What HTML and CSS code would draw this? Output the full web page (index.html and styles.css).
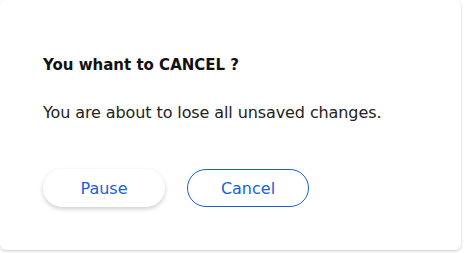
FILE: index.html
```html
<!DOCTYPE html>
<html>
<head>
<meta charset="utf-8">
<link rel="stylesheet" href="styles.css">
</head>
<body>
<div class="card">
  <h2 class="title">You whant to CANCEL ?</h2>
  <p class="message">You are about to lose all unsaved changes.</p>
  <div class="actions">
    <button class="btn btn-pause">Pause</button>
    <button class="btn btn-cancel">Cancel</button>
  </div>
</div>
</body>
</html>
```
FILE: styles.css
```css
html, body {
  margin: 0;
  padding: 0;
  background: #ffffff;
}
body {
  width: 464px;
  height: 253px;
  font-family: "DejaVu Sans", sans-serif;
}
.card {
  box-sizing: border-box;
  width: 461px;
  height: 250px;
  background: #fff;
  border-radius: 6px;
  box-shadow: 0 1px 3px rgba(0,0,0,0.22);
  padding: 55px 0 0 43px;
}
.title {
  margin: 0;
  font-size: 15px;
  font-weight: bold;
  color: #111;
  line-height: 20px;
}
.message {
  margin: 27px 0 0;
  font-size: 16px;
  letter-spacing: -0.1px;
  color: #222;
  line-height: 22px;
}
.actions {
  display: flex;
  gap: 22px;
  margin-top: 45px;
}
.btn {
  box-sizing: border-box;
  width: 122px;
  height: 38px;
  border-radius: 19px;
  background: #fff;
  font-family: "DejaVu Sans", sans-serif;
  font-size: 16px;
  color: #1a5fd8;
  padding: 0;
}
.btn-pause {
  border: none;
  box-shadow: 0 2px 4px rgba(0,0,0,0.2);
}
.btn-cancel {
  border: 1px solid #1a5fd8;
}
```
